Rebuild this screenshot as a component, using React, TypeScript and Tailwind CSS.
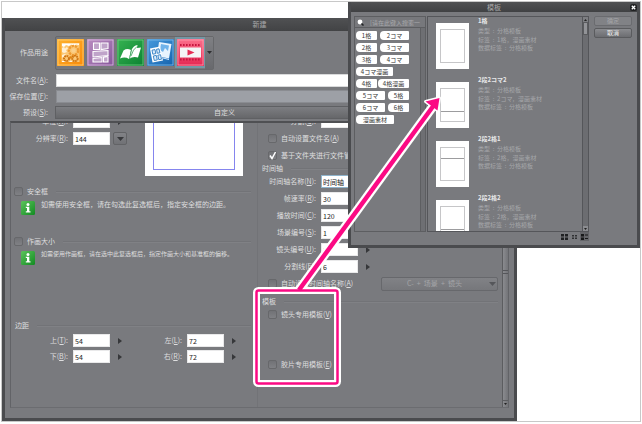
import React, { useState } from "react";

function Key({ k, colon = true }: { k: string; colon?: boolean }) {
  return (
    <>
      (<span className="underline">{k}</span>){colon ? ":" : ""}
    </>
  );
}

function Arrow() {
  return (
    <button type="button" aria-label="展开" className="flex h-[13px] w-[14px] items-center justify-center">
      <svg width="4" height="6" viewBox="0 0 4 6">
        <path d="M0 0L4 3L0 6z" fill="#36373a" />
      </svg>
    </button>
  );
}

function Down({ color = "#38393c" }: { color?: string }) {
  return (
    <svg width="7" height="4" viewBox="0 0 7 4">
      <path d="M0 0H7L3.500 4z" fill={color} />
    </svg>
  );
}

type FieldProps = {
  id: string;
  label: string;
  k: string;
  value: string;
  labelClass: string;
  arrow?: boolean;
  drop?: boolean;
  focus?: boolean;
};

function Field({ id, label, k, value, labelClass, arrow, drop, focus }: FieldProps) {
  return (
    <div className="flex h-[13px] items-center gap-[3px]">
      <label htmlFor={id} className={`${labelClass} mr-0.5 shrink-0 text-right whitespace-nowrap`}>
        {label}
        <Key k={k} />
      </label>
      <input
        id={id}
        defaultValue={value}
        className={`h-[13px] w-[37px] shrink-0 border bg-white px-px text-[7px] leading-none text-[#222] ${
          focus ? "border-[#8fb4cc]" : "border-[#e9e9ea]"
        }`}
      />
      {arrow && <Arrow />}
      {drop && (
        <button
          type="button"
          aria-label="选择分辨率"
          className="flex h-[13px] w-[14px] items-center justify-center rounded-xs border border-[#626366] bg-linear-to-b from-[#828387] to-[#707175]"
        >
          <Down />
        </button>
      )}
    </div>
  );
}

function Check({ text, k, checked }: { text: string; k?: string; checked?: boolean }) {
  return (
    <label className="flex h-[13px] items-center gap-1 whitespace-nowrap">
      <span className="relative flex h-[9px] w-[9px]">
        <input
          type="checkbox"
          defaultChecked={checked}
          className="peer h-[9px] w-[9px] appearance-none rounded-xs border border-[#67686b] bg-linear-to-b from-[#717276] to-[#808185]"
        />
        <svg className="pointer-events-none absolute inset-0 hidden peer-checked:block" width="9" height="9" viewBox="0 0 9 9">
          <path d="M2 4.500L4 7.500L7.500 1" fill="none" stroke="#fff" strokeWidth="1.500" />
        </svg>
      </span>
      <span>
        {text}
        {k && <Key k={k} colon={false} />}
      </span>
    </label>
  );
}

function Rule() {
  return <div className="h-px flex-1 bg-[#727377] shadow-[0_1px_0_#808185]" />;
}

function Info({ children, small }: { children: React.ReactNode; small?: boolean }) {
  return (
    <div className="mt-[3px] flex items-start gap-1.5 pl-2.5">
      <svg className="shrink-0" width="14" height="14" viewBox="0 0 14 14">
        <defs>
          <linearGradient id="info" x1="0" y1="0" x2="1" y2="1">
            <stop offset="0" stopColor="#5cc35c" />
            <stop offset="1" stopColor="#128b22" />
          </linearGradient>
        </defs>
        <rect width="14" height="14" rx="1.500" fill="url(#info)" />
        <circle cx="7" cy="3.400" r="1.500" fill="#fff" />
        <path d="M4.800 5.800H8.300V10.200H9.500V11.500H4.800V10.200H6V7.100H4.800z" fill="#fff" />
      </svg>
      <p className={small ? "text-[6px] leading-[6px] whitespace-nowrap" : "leading-[6px] whitespace-nowrap"}>{children}</p>
    </div>
  );
}

function ToolArt({ kind }: { kind: number }) {
  return (
    <svg width="27" height="27" viewBox="0 0 27 27">
      <defs>
        <linearGradient id="t0" x1="0" y1="0" x2="1" y2="1">
          <stop offset="0" stopColor="#fdb22e" />
          <stop offset="1" stopColor="#fb8a08" />
        </linearGradient>
        <linearGradient id="t1" x1="0" y1="0" x2="1" y2="1">
          <stop offset="0" stopColor="#b98cc0" />
          <stop offset="1" stopColor="#86569b" />
        </linearGradient>
        <linearGradient id="t2" x1="0" y1="0" x2="1" y2="1">
          <stop offset="0" stopColor="#36b352" />
          <stop offset="1" stopColor="#0b8131" />
        </linearGradient>
        <linearGradient id="t3" x1="0" y1="0" x2="1" y2="1">
          <stop offset="0" stopColor="#479add" />
          <stop offset="1" stopColor="#1462ac" />
        </linearGradient>
        <linearGradient id="t4" x1="0" y1="0" x2="0" y2="1">
          <stop offset="0" stopColor="#fb6f8b" />
          <stop offset="1" stopColor="#e42752" />
        </linearGradient>
      </defs>
      {kind === 0 && (
        <>
          <rect width="27" height="27" fill="url(#t0)" />
          <rect x="1" y="1" width="25" height="25" fill="none" stroke="#ffd27c" strokeWidth="0.800" />
          <rect x="4.500" y="4" width="18" height="19" fill="#fbc877" />
          <path d="M5 4.500H22V6l-3-.5-2 1-3-1-2 1.500-3-1L7 8l-2-1z" fill="#fff" />
          <path d="M5 9l2-1 1 1.500 2-1.500 1 2-2 1 1 2-3 1-2-1zM5 16l3-1 1 1-2 2-2 .5z" fill="#fff0d4" />
          <circle cx="16.500" cy="11.500" r="4.600" fill="none" stroke="#ee9a32" strokeWidth="2.400" strokeDasharray="2.400 .8" />
          <circle cx="16.500" cy="11.500" r="2" fill="#fbd08c" />
          <circle cx="9.500" cy="19.500" r="2.500" fill="none" stroke="#cf7411" strokeWidth="2" strokeDasharray="1.700 .6" />
          <circle cx="18" cy="19.500" r="2.700" fill="none" stroke="#cf7411" strokeWidth="2" strokeDasharray="1.700 .6" />
          <path d="M12.500 17.500l2-.5.500 2-1.500 1z" fill="#e0830f" />
          <path d="M5 22.500h2.500M12.500 22.300h2.500" stroke="#fff" strokeWidth="1" />
        </>
      )}
      {kind === 1 && (
        <>
          <rect width="27" height="27" fill="url(#t1)" />
          <rect x="1" y="1" width="25" height="25" fill="none" stroke="#dcbfe0" strokeWidth="0.800" />
          <path d="M6.500 4h6v6.500h-6zM14 4h7v5.500l-7 1zM6 12.500l15-1v5L6 18zM6 19.500l9-1V23H6zM16.500 18.200l4.500-.7V23h-4.500z" fill="#bfa3c9" stroke="#fff" strokeWidth="1.100" />
        </>
      )}
      {kind === 2 && (
        <>
          <rect width="27" height="27" fill="url(#t2)" />
          <rect x="1" y="1" width="25" height="25" fill="none" stroke="#73cc84" strokeWidth="0.800" />
          <path d="M3 19.500L6.500 11.500Q10 9 14 11L12 20Q8 17.500 3 19.500z" fill="#fff" />
          <path d="M12 20L14.500 11Q16.500 6.500 20.500 6L20 9L24 8.500L21 18.500Q16 17 12 20z" fill="#fff" />
          <path d="M14 17Q16 10 20 7.500M12.500 20L14.500 11" fill="none" stroke="#199341" strokeWidth="0.700" />
        </>
      )}
      {kind === 3 && (
        <>
          <rect width="27" height="27" fill="url(#t3)" />
          <rect x="1" y="1" width="25" height="25" fill="none" stroke="#83bfec" strokeWidth="0.800" />
          <path d="M12 3L24.500 5L22 19.500L10 17z" fill="#e8f4fe" />
          <path d="M14 5L22 6.500L21 12L18 9L16 13L13 11z" fill="#70b3ea" />
          <path d="M3 9.500L13 7.500L16 21.500L5.500 23.500z" fill="#fff" />
          <path d="M5 11.200l3-.6.800 4-3 .6zM9.500 10.300l2.500-.5.900 4-2.600.5zM6.300 17l3-.6 1 4.500-3 .6zM10.800 16.200l2.700-.5 1 4.500-2.700.5z" fill="#dcecfa" stroke="#2d7cc2" strokeWidth="0.900" />
          <path d="M16 19l6 1.500" stroke="#d5eaff" strokeWidth="1" />
        </>
      )}
      {kind === 4 && (
        <>
          <rect width="27" height="27" fill="url(#t4)" />
          <rect x="1" y="1" width="25" height="25" fill="none" stroke="#ff9db0" strokeWidth="0.800" />
          <path d="M3 6H24M3 20.500H24" stroke="#c5163f" strokeWidth="1.800" strokeDasharray="1.600 1.400" />
          <rect x="3" y="8.500" width="21" height="10" fill="#f4f4f5" />
          <path d="M10.500 10.500L17.500 13.500L10.500 16.500z" fill="#e42c54" />
        </>
      )}
    </svg>
  );
}

const tools = ["插图", "漫画", "书籍", "展示", "动画"];

function MainWindow() {
  const [active, setActive] = useState(4);
  return (
    <section className="mt-4 mr-[123px] border-x-[3px] border-b-[3px] border-[#4a4b4e] bg-[#797a7e] text-[#dededf]">
      <h1 className="flex h-[13px] items-center justify-center bg-linear-to-b from-[#505153] to-[#424345] text-[#a9a9ab]">新建</h1>
      <div className="flex h-[43px] items-center">
        <span className="w-[43px] text-right whitespace-nowrap">作品用途</span>
        <div className="ml-[7px] flex h-[34px] items-center gap-[3px] rounded-xs border border-[#67686b] bg-[#77787c] pl-px">
          {tools.map((t, i) => (
            <button
              key={t}
              type="button"
              aria-label={t}
              onClick={() => setActive(i)}
              className={i === active ? "h-[27px] w-[27px] outline-2 outline-[#7497a5]" : "h-[27px] w-[27px]"}
            >
              <ToolArt kind={i} />
            </button>
          ))}
          <button
            type="button"
            aria-label="更多用途"
            className="-ml-0.5 flex h-8 w-2 items-center justify-center bg-linear-to-b from-[#7f8084] to-[#68696d]"
          >
            <svg width="5" height="3" viewBox="0 0 5 3">
              <path d="M0 0H5L2.500 3z" fill="#2e2f31" />
            </svg>
          </button>
        </div>
      </div>
      <div className="flex flex-col gap-[3px]">
        <div className="flex items-center">
          <label htmlFor="name" className="w-[43px] text-right whitespace-nowrap">
            文件名
            <Key k="A" />
          </label>
          <input id="name" className="ml-2 h-[13px] flex-1 border border-[#d9dadb] bg-white px-1" />
        </div>
        <div className="flex items-center">
          <label htmlFor="place" className="w-[43px] text-right whitespace-nowrap">
            保存位置
            <Key k="F" />
          </label>
          <input id="place" disabled className="ml-2 h-[13px] flex-1 border border-[#8a8c91] bg-[#9da0a6] px-1" />
        </div>
        <div className="flex items-center">
          <label htmlFor="preset" className="w-[43px] text-right whitespace-nowrap">
            预设
            <Key k="S" />
          </label>
          <button
            id="preset"
            type="button"
            className="ml-[7px] h-[13px] flex-1 border border-[#5f6063] bg-linear-to-b from-[#7d7e82] to-[#66676a] pr-[120px]"
          >
            自定义
          </button>
        </div>
      </div>
      <div className="mx-[5px] mt-[2px] mb-2.5 flex border border-t-2 border-[#626367] border-t-[#4f5053] border-b-[#6b6c70]">
        <div className="grid h-[284px] flex-1 grid-cols-[247px_1fr] overflow-hidden">
          <div className="border-r border-[#727377] pr-[6px]">
            <div className="flex h-[53px] pl-0.5">
              <div className="-mt-2 flex w-[132px] flex-col gap-1">
                <Field id="unit" label="单位" k="H" value="" labelClass="w-[55px]" arrow />
                <Field id="res" label="分辨率" k="R" value="144" labelClass="w-[55px]" drop />
              </div>
              <div className="h-[53px] w-[98px] bg-white px-2 pb-1.5">
                <div className="h-full border border-t-0 border-[#8585ee]" />
              </div>
            </div>
            <div className="mt-[9px] flex items-center gap-2 pl-[3px]">
              <Check text="安全框" />
              <Rule />
            </div>
            <Info>如需使用安全框，请在勾选此复选框后，指定安全框的边距。</Info>
            <div className="mt-5 flex items-center gap-2 pl-[3px]">
              <Check text="作画大小" />
              <Rule />
            </div>
            <Info small>如需使用作画框，请在选中此复选框后，指定作画大小和基准框的偏移。</Info>
            <div className="mt-[54px] flex h-[13px] items-center gap-2 pl-1">
              <h2>边距</h2>
              <Rule />
            </div>
            <div className="mt-0.5 grid w-[230px] grid-cols-2 gap-y-[3px] pl-0.5">
              <Field id="top" label="上" k="T" value="54" labelClass="w-[55px]" arrow />
              <Field id="left" label="左" k="L" value="72" labelClass="w-[55px]" arrow />
              <Field id="bottom" label="下" k="B" value="54" labelClass="w-[55px]" arrow />
              <Field id="right" label="右" k="R" value="72" labelClass="w-[55px]" arrow />
            </div>
          </div>
          <div className="-mt-2 pr-1">
            <Field id="rate" label="分割" k="G" value="" labelClass="w-[58px]" />
            <div className="mt-1 flex flex-col gap-1 pl-2.5">
              <Check text="自动设置文件名" k="A" />
              <Check text="基于文件夹进行文件管理" checked />
            </div>
            <div className="flex h-[13px] items-center gap-2 pl-1">
              <h2>时间轴</h2>
              <Rule />
            </div>
            <div className="flex flex-col gap-1">
              <Field id="tl" label="时间轴名称" k="N" value="时间轴" labelClass="w-[58px]" focus />
              <Field id="fps" label="帧速率" k="R" value="30" labelClass="w-[58px]" />
              <Field id="time" label="播放时间" k="C" value="120" labelClass="w-[58px]" />
              <Field id="scene" label="场景编号" k="S" value="1" labelClass="w-[58px]" />
              <Field id="shot" label="镜头编号" k="U" value="1" labelClass="w-[58px]" arrow />
              <Field id="div" label="分割线" k="E" value="6" labelClass="w-[58px]" arrow />
              <div className="flex h-[13px] items-center justify-between pl-2.5">
                <Check text="自动设置时间轴名称" k="A" />
                <div className="relative flex">
                  <select
                    aria-label="名称格式"
                    disabled
                    className="h-[14px] w-[117px] appearance-none rounded-xs border border-[#67686c] bg-linear-to-b from-[#818286] to-[#76777b] pr-2.5 text-center text-[7px] leading-none text-[#a4a5a8] opacity-100 [text-align-last:center]"
                  >
                    <option>{"C-\u00a0 +\u00a0 场景\u00a0 +\u00a0 镜头"}</option>
                  </select>
                  <span className="pointer-events-none absolute top-[5px] right-0.5">
                    <Down color="#55565a" />
                  </span>
                </div>
              </div>
            </div>
            <div className="mt-[5px] flex h-[13px] items-center gap-2 pl-1">
              <h2>模板</h2>
              <Rule />
            </div>
            <div className="flex flex-col gap-[37px] pl-2.5">
              <Check text="镜头专用模板" k="V" />
              <Check text="胶片专用模板" k="E" />
            </div>
          </div>
        </div>
        <div className="flex w-1.5 flex-col justify-between border-l border-[#5c5d60] bg-linear-to-r from-[#8a8b8f] to-[#737478]">
          <span />
          <span className="mt-5 h-1 border-y border-[#55565a]" />
          <span className="flex h-[7px] items-center justify-center border-t border-[#5c5d60]">
            <svg width="3" height="2" viewBox="0 0 3 2">
              <path d="M0 0H3L1.500 2z" fill="#222" />
            </svg>
          </span>
        </div>
      </div>
    </section>
  );
}

const tagRows = [
  ["1格", "2コマ"],
  ["2格", "3コマ"],
  ["3格", "4コマ"],
  ["4コマ漫画"],
  ["4格", "4格漫画"],
  ["5コマ", "5格"],
  ["6コマ", "6格"],
  ["漫画素材"],
];
const tagWidth: Record<string, string> = {
  "4コマ漫画": "w-[37px]",
  漫画素材: "w-[38px]",
  "4格漫画": "w-[31px]",
};
const templates = [
  { title: "1格", tag: "1格，漫画素材", split: "" },
  { title: "2段2コマ2", tag: "2コマ，漫画素材", split: "h-[23px]" },
  { title: "2段2格1", tag: "2格，漫画素材", split: "h-[11px]" },
  { title: "2段2格2", tag: "2格，漫画素材", split: "h-[23px]" },
];
const sep = "\u00a0 :\u00a0 ";

function tagSize(t: string) {
  return tagWidth[t] ?? (t.endsWith("コマ") ? "w-[29px]" : "w-[21px]");
}

function Dialog() {
  return (
    <section className="absolute top-0.5 right-0.5 left-[348px] border-x-[3px] border-b-[3px] border-[#4a4b4e] bg-[#797a7e] text-[6px] leading-none">
      <header className="relative flex h-2.5 items-center justify-center bg-linear-to-b from-[#505153] to-[#404143] text-[7px] text-[#a9a9ab]">
        <h2>模板</h2>
        <button type="button" aria-label="关闭" className="absolute top-0.5 right-0">
          <svg width="7" height="7" viewBox="0 0 7 7">
            <rect width="7" height="7" rx="2.500" fill="#202122" />
            <path d="M1.800 1.800L5.200 5.200M5.200 1.800L1.800 5.200" stroke="#fff" strokeWidth="1.300" />
          </svg>
        </button>
      </header>
      <div className="flex pt-1 pr-[5px] pl-[3px]">
        <div className="h-[216px] w-[72px] border border-[#5d5e61]">
          <div className="flex h-[11px] items-center gap-1.5 border-b border-[#5d5e61] bg-[#77787c] pl-0.5">
            <svg className="shrink-0" width="7" height="7" viewBox="0 0 7 7">
              <circle cx="3" cy="3" r="2.400" fill="#fff" />
              <path d="M4.500 4.500L6.500 6.500" stroke="#1f2022" strokeWidth="1.500" />
            </svg>
            <input
              aria-label="搜索"
              placeholder="[请在此键入搜索一"
              className="w-full min-w-0 text-[6px] leading-none placeholder:text-[#a9aaad]"
            />
          </div>
          <div className="flex h-[203px]">
            <div className="flex flex-1 flex-col gap-[3px] pt-[3px] pl-px">
              {tagRows.map((row) => (
                <div key={row.join()} className={row[1] === "4格漫画" ? "flex gap-px" : "flex gap-[3px]"}>
                  {row.map((t) => (
                    <button
                      key={t}
                      type="button"
                      className={`h-[9px] rounded-l-sm rounded-r-[1px] bg-white text-center leading-[9px] whitespace-nowrap text-[#333] ${tagSize(t)}`}
                    >
                      {t}
                    </button>
                  ))}
                </div>
              ))}
            </div>
            <div className="w-[5px] border-l border-[#5d5e61] bg-[#6e6f73]" />
          </div>
        </div>
        <div className="ml-px flex h-[216px] flex-1 border border-[#55565a]">
          <ul className="flex flex-1 flex-col gap-[13px] overflow-hidden pt-[6px] pl-[8px]">
            {templates.map((t) => (
              <li key={t.title} className="flex h-[46px] shrink-0 gap-[9px]">
                <div className="h-[46px] w-[33px] bg-white px-[4px] py-[6px]">
                  <div className="h-full border border-[#c6c6c8]">
                    {t.split && <div className={`${t.split} border-b border-[#9c9c9e]`} />}
                  </div>
                </div>
                <div className="-mt-1.5 leading-[8px] text-[#a6a7aa]">
                  <h3 className="mb-0.5 font-bold text-[#e8e8e9]">{t.title}</h3>
                  <p className="mb-px whitespace-nowrap">类型{sep}分格模板</p>
                  <p className="whitespace-nowrap">标签{sep}{t.tag}</p>
                  <p className="whitespace-nowrap">数据标签{sep}分格模板</p>
                </div>
              </li>
            ))}
          </ul>
          <div className="flex w-[6px] flex-col border-l border-[#55565a] bg-[#6c6d71]">
            <span className="flex h-[5px] items-center justify-center bg-[#7d7e82]">
              <svg width="3" height="2" viewBox="0 0 3 2">
                <path d="M0 2H3L1.500 0z" fill="#222" />
              </svg>
            </span>
            <span className="h-[13px] border border-[#5a5b5e] bg-[#929397]" />
            <span className="mt-auto flex h-[5px] items-center justify-center bg-[#8b8c90]">
              <svg width="3" height="2" viewBox="0 0 3 2">
                <path d="M0 0H3L1.500 2z" fill="#222" />
              </svg>
            </span>
          </div>
        </div>
        <div className="ml-[5px] flex w-[38px] flex-col gap-0.5">
          <button type="button" disabled className="h-2.5 rounded-xs border border-[#6a6b6f] bg-[#818286] text-[#a4a5a8]">
            确定
          </button>
          <button
            type="button"
            className="h-2.5 rounded-xs border border-[#5a5b5e] bg-linear-to-b from-[#8a8b8f] to-[#6c6d71] text-[#efefef]"
          >
            取消
          </button>
        </div>
      </div>
      <div className="mr-[48px] flex h-[13px] items-start justify-end gap-[3px]">
        <button type="button" aria-label="大图标" className="flex h-[9px] w-2 items-center justify-center">
          <svg width="7" height="6" viewBox="0 0 7 6">
            <path d="M0 0h3v2.500H0zM4 0h3v2.500H4zM0 3.500h3V6H0zM4 3.500h3V6H4z" fill="#202123" />
          </svg>
        </button>
        <button type="button" aria-label="小图标" className="flex h-[9px] w-1.5 items-center justify-center">
          <svg width="5" height="4" viewBox="0 0 5 4">
            <path d="M0 0h2v1.500H0zM3 0h2v1.500H3zM0 2.500h2V4H0zM3 2.500h2V4H3z" fill="#303133" />
          </svg>
        </button>
        <button type="button" aria-label="详细" className="flex h-[9px] w-[9px] items-center justify-center bg-[#646569]">
          <svg width="7" height="6" viewBox="0 0 7 6">
            <path d="M0 0h3v2.500H0zM0 3.500h3V6H0zM4 .5h3v1H4zM4 4h3v1H4z" fill="#18191a" />
          </svg>
        </button>
      </div>
    </section>
  );
}

export default function App() {
  return (
    <main className="relative bg-white p-px font-['Noto_Sans_CJK_SC','Liberation_Sans',sans-serif] text-[7px] leading-none">
      <div className="border border-[#c8c8c8]">
        <MainWindow />
      </div>
      <Dialog />
      <svg className="pointer-events-none absolute top-0 left-0" width="642" height="424" viewBox="0 0 642 424" fill="none">
        <rect x="256.500" y="290.500" width="81" height="93" rx="2" stroke="#fff" strokeWidth="7" />
        <path d="M299 290L434 105" stroke="#fff" strokeWidth="9" />
        <path d="M439.500 98L425.500 101.500L437.500 110.500z" fill="#fff" stroke="#fff" strokeWidth="3" strokeLinejoin="round" />
        <rect x="256.500" y="290.500" width="81" height="93" rx="2" stroke="#fb0a84" strokeWidth="2.500" />
        <path d="M299 290L434 105" stroke="#fb0a84" strokeWidth="4.500" />
        <path d="M439.500 98L425.500 101.500L437.500 110.500z" fill="#fb0a84" />
      </svg>
    </main>
  );
}
